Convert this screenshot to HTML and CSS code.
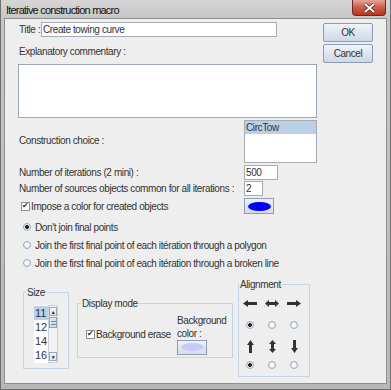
FILE: index.html
```html
<!DOCTYPE html>
<html lang="en">
<head>
    <meta charset="UTF-8">
    <title>Iterative construction macro</title>
    <link rel="stylesheet" href="styles.css">
</head>
<body>

<div class="window">
    <div class="titlebar">
        <span class="caption">Iterative construction macro</span>
        <span class="close">
            <svg width="13" height="10" viewBox="0 0 13 10"><path d="M2 1 L11 9 M11 1 L2 9" stroke="#5a1a12" stroke-width="3.4"/><path d="M2 1 L11 9 M11 1 L2 9" stroke="#fff" stroke-width="2"/></svg>
        </span>
    </div>

    <div class="client">
        <div class="top">
            <div class="fields">
                <div class="title-row">
                    <label for="title">Title :</label>
                    <input class="field title-input" id="title" type="text" value="Create towing curve">
                </div>
                <div class="caption-label">Explanatory commentary :</div>
                <textarea class="comment"></textarea>

                <div class="row">
                    <span class="row-label">Construction choice :</span>
                    <div class="listbox"><div class="item selected">CircTow</div></div>
                </div>
                <div class="row row-iter">
                    <span class="row-label">Number of iterations (2 mini) :</span>
                    <input class="field num" type="text" value="500">
                </div>
                <div class="row row-src">
                    <span class="row-label">Number of sources objects common for all iterations :</span>
                    <input class="field num small" type="text" value="2">
                </div>
                <div class="row row-color">
                    <span class="row-label check">
                        <span class="box checked"></span>Impose a color for created objects
                    </span>
                    <button class="color-btn"><span class="swatch blue"></span></button>
                </div>

                <div class="radio-row first"><span class="radio on"></span>Don't join final points</div>
                <div class="radio-row"><span class="radio"></span>Join the first final point of each itération through a polygon</div>
                <div class="radio-row"><span class="radio"></span>Join the first final point of each itération through a broken line</div>
            </div>

            <div class="actions">
                <button class="btn">OK</button>
                <button class="btn">Cancel</button>
            </div>
        </div>

        <div class="groups">
            <fieldset class="group size">
                <legend>Size</legend>
                <div class="sizelist">
                    <div class="items">
                        <div class="item selected">11</div>
                        <div class="item">12</div>
                        <div class="item">14</div>
                        <div class="item">16</div>
                    </div>
                    <div class="sb">
                        <span class="sb-btn">&#9650;</span>
                        <span class="sb-thumb"></span>
                        <span class="sb-track"></span>
                        <span class="sb-btn">&#9660;</span>
                    </div>
                </div>
            </fieldset>

            <fieldset class="group display">
                <legend>Display mode</legend>
                <div class="display-body">
                    <span class="check erase"><span class="box checked"></span>Background erase</span>
                    <div class="bg-col">
                        <div>Background</div>
                        <div>color :</div>
                        <button class="color-btn light"><span class="swatch lilac"></span></button>
                    </div>
                </div>
            </fieldset>

            <fieldset class="group align">
                <legend>Alignment</legend>
                <div class="align-grid">
                    <svg width="14" height="7" viewBox="0 0 14 7"><path d="M0 3.5 L5 0 V2 H14 V5 H5 V7 Z"/></svg>
                    <svg width="14" height="7" viewBox="0 0 14 7"><path d="M0 3.5 L4 0 V2 H10 V0 L14 3.5 L10 7 V5 H4 V7 Z"/></svg>
                    <svg width="14" height="7" viewBox="0 0 14 7"><path d="M14 3.5 L9 0 V2 H0 V5 H9 V7 Z"/></svg>
                    <span class="radio on"></span>
                    <span class="radio"></span>
                    <span class="radio"></span>
                    <svg width="7" height="13" viewBox="0 0 7 13"><path d="M3.5 0 L7 5 H5 V13 H2 V5 H0 Z"/></svg>
                    <svg width="7" height="13" viewBox="0 0 7 13"><path d="M3.5 0 L7 4 H5 V9 H7 L3.5 13 L0 9 H2 V4 H0 Z"/></svg>
                    <svg width="7" height="13" viewBox="0 0 7 13"><path d="M3.5 13 L7 8 H5 V0 H2 V8 H0 Z"/></svg>
                    <span class="radio on"></span>
                    <span class="radio"></span>
                    <span class="radio"></span>
                </div>
            </fieldset>
        </div>
    </div>
</div>

</body>
</html>
```

FILE: styles.css
```css
* {
    box-sizing: border-box;
}
body {
    margin: 0;
    font-family: "Liberation Sans", Arial, sans-serif;
    font-size: 10px;
    letter-spacing: -0.4px;
    color: #333;
}
.window {
    width: 391px;
    height: 390px;
    background: linear-gradient(#d6d6d6, #c6c6c6 19px, #b8b8b8);
    border: 1px solid #6f6f6f;
    border-top: 0;
    padding: 0 4px 6px;
    display: flex;
    flex-direction: column;
}
.titlebar {
    height: 19px;
    display: flex;
    justify-content: space-between;
    align-items: flex-start;
}
.caption {
    font-size: 11px;
    letter-spacing: -0.8px;
    line-height: 19px;
    padding: 1px 0 0 1px;
    color: #111;
}
.close {
    width: 34px;
    height: 16px;
    background: linear-gradient(#e6a59a, #d0604f 45%, #b8341f);
    border: 1px solid #6e2a21;
    border-top: 0;
    border-radius: 0 0 4px 4px;
    display: flex;
    align-items: center;
    justify-content: center;
}
.client {
    flex: 1;
    background: #eeeeee;
    box-shadow: 0 0 0 1px #8f8f8f;
    display: flex;
    flex-direction: column;
}
.top {
    display: flex;
}
.fields {
    margin-left: 13px;
    width: 299px;
    display: flex;
    flex-direction: column;
}
.title-row {
    display: flex;
    align-items: center;
    margin-top: 3px;
    height: 15px;
}
.title-row label {
    padding-left: 1px;
    width: 23px;
}
.field {
    font: inherit;
    letter-spacing: inherit;
    height: 15px;
    border: 1px solid #a5acb5;
    background: #fff;
    padding: 0 1px;
    margin: 0;
    color: #333;
    outline: none;
}
.title-input {
    width: 236px;
}
.caption-label {
    margin-top: 9px;
    line-height: 12px;
    padding-left: 1px;
}
.comment {
    display: block;
    margin: 6px 0 0;
    width: 299px;
    height: 54px;
    border: 1px solid #9ca7b5;
    background: #fff;
    resize: none;
}
.row {
    display: flex;
    align-items: center;
}
.row-label {
    width: 226px;
    padding-left: 1px;
}
.listbox {
    margin-top: 2px;
    width: 73px;
    height: 43px;
    border: 1px solid #a5acb5;
    background: #fff;
}
.item {
    line-height: 13px;
    padding-left: 1px;
}
.item.selected {
    background: #b9d0e6;
}
.row-iter {
    margin-top: 2px;
}
.row-src {
    margin-top: 1px;
}
.row-color {
    margin-top: 2px;
}
.num {
    width: 34px;
}
.num.small {
    width: 19px;
}
.check {
    display: flex;
    align-items: center;
}
.row-color .check {
    padding-left: 3px;
}
.box {
    width: 9px;
    height: 9px;
    margin-right: 1px;
    border: 1px solid #8e8f8f;
    background: #fff;
    position: relative;
}
.box.checked::after {
    content: "\2714";
    position: absolute;
    left: 0;
    top: -2px;
    font-size: 8px;
    color: #333;
}
.color-btn {
    width: 30px;
    height: 16px;
    padding: 0;
    border: 1px solid #8d9db3;
    background: linear-gradient(#eef2f7, #d5dde8);
    display: flex;
    align-items: center;
    justify-content: center;
}
.swatch {
    width: 23px;
    height: 9px;
    border-radius: 50%;
}
.swatch.blue {
    background: #0000ff;
}
.swatch.lilac {
    height: 8px;
    background: #c9c9fb;
}
.radio-row {
    height: 18px;
    display: flex;
    align-items: center;
}
.radio-row.first {
    margin-top: 4px;
}
.radio {
    width: 8px;
    height: 8px;
    border-radius: 50%;
    border: 1px solid #9aabbe;
    background: radial-gradient(#fdfdfd, #e1e8f0);
}
.radio-row .radio {
    margin: 0 4px 0 5px;
}
.radio.on {
    background: radial-gradient(circle, #222 0 1.6px, #e8edf3 2.2px);
}
.actions {
    margin-left: 6px;
    padding-top: 4px;
    display: flex;
    flex-direction: column;
    gap: 2px;
}
.btn {
    width: 50px;
    height: 19px;
    padding: 0;
    font: inherit;
    letter-spacing: inherit;
    color: #333;
    border: 1px solid #8a9bb3;
    border-radius: 2px;
    background: linear-gradient(#f2f5f9, #dde5ee 50%, #cfd9e6);
}
.groups {
    flex: 1;
    display: flex;
    align-items: center;
    padding-left: 18px;
}
.group {
    margin: 0;
    padding: 0;
    min-width: 0;
    border: 1px solid #c5d5e6;
}
.group legend {
    padding: 0 1px;
    line-height: 12px;
}
.size {
    width: 46px;
}
.size legend {
    margin-left: 2px;
}
.display {
    width: 156px;
    margin-left: 8px;
}
.display legend {
    margin-left: 3px;
}
.align {
    width: 72px;
    margin-left: 5px;
}
.sizelist {
    display: flex;
    width: 24px;
    height: 58px;
    margin: 6px 0 5px 10px;
}
.items {
    width: 14px;
    padding-top: 1px;
    background: #fff;
}
.items .item {
    line-height: 14px;
    font-size: 11px;
    letter-spacing: 0;
}
.sb {
    width: 10px;
    padding: 1px 0;
    display: flex;
    flex-direction: column;
    background: #f3f3f3;
    border: 1px solid #c9d2dc;
}
.sb-btn {
    height: 9px;
    font-size: 5px;
    line-height: 8px;
    text-align: center;
    color: #222;
    border: 1px solid #9aa8b8;
    background: linear-gradient(#f4f6f9, #dde4ec);
}
.sb-thumb {
    height: 11px;
    margin-top: 1px;
    border: 1px solid #8fa3bb;
    background: repeating-linear-gradient(#d3deea 0 2px, #6d87a6 2px 3px) center / 5px 7px no-repeat, linear-gradient(#e6eef7, #cfdcea);
}
.sb-track {
    flex: 1;
}
.display-body {
    display: flex;
    align-items: center;
    padding: 4px 0 2px 8px;
}
.erase {
    width: 91px;
}
.bg-col {
    line-height: 13px;
}
.color-btn.light {
    height: 15px;
}
.align-grid {
    display: grid;
    grid-template-columns: repeat(3, 22px);
    grid-template-rows: 20px 22px 22px 14px;
    padding: 3px 0 4px;
    justify-items: center;
    align-items: center;
}
.align-grid svg {
    fill: #333;
}
```
